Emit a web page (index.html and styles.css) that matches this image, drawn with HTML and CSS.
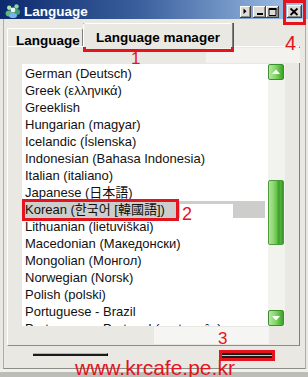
FILE: index.html
```html
<!DOCTYPE html>
<html>
<head>
<meta charset="utf-8">
<title>Language</title>
<link rel="stylesheet" href="styles.css">
</head>
<body>
<div class="window">
  <div class="titlebar">
    <svg class="appicon" width="16" height="15" viewBox="0 0 16 15">
      <circle cx="11.5" cy="3.5" r="2.2" fill="#8fd6a8"/>
      <ellipse cx="11.5" cy="9" rx="3.6" ry="3" fill="#3da06e"/>
      <circle cx="4.2" cy="4.8" r="2.2" fill="#a8e6b8"/>
      <ellipse cx="4.2" cy="10.4" rx="3.6" ry="3" fill="#5bbb7c"/>
      <circle cx="8" cy="7" r="2.4" fill="#eef6ff"/>
      <ellipse cx="8" cy="12.6" rx="4" ry="2.6" fill="#7fb2ec"/>
    </svg>
    <span class="title">Language</span>
    <div class="tbtns">
      <span class="tbtn b-arrow"><svg width="11" height="12" viewBox="0 0 11 12"><polygon points="3.5,2.5 6.5,5.3 3.5,8" fill="#000"/></svg></span>
      <span class="tbtn b-min"><svg width="13" height="12" viewBox="0 0 13 12"><rect x="4" y="7" width="6" height="2" fill="#000"/></svg></span>
      <span class="tbtn b-max"><svg width="13" height="12" viewBox="0 0 13 12"><path d="M3 2.5h7v7h-7z" fill="none" stroke="#000" stroke-width="1"/><rect x="3" y="2" width="7.5" height="2" fill="#000"/></svg></span>
      <span class="tbtn b-close"><svg width="15" height="13" viewBox="0 0 15 13"><path d="M3.5 3.5L10.5 10M10.5 3.5L3.5 10" stroke="#000" stroke-width="1.8"/></svg></span>
    </div>
  </div>

  <div class="client">
    <div class="tabs">
      <div class="tab">Language</div>
      <div class="tab active">Language manager</div>
    </div>
    <div class="panel">
      <div class="listwrap">
        <ul class="list">
          <li>German (Deutsch)</li>
          <li>Greek (ελληνικά)</li>
          <li>Greeklish</li>
          <li>Hungarian (magyar)</li>
          <li>Icelandic (Íslenska)</li>
          <li>Indonesian (Bahasa Indonesia)</li>
          <li>Italian (italiano)</li>
          <li>Japanese (日本語)</li>
          <li class="sel">Korean (한국어 [韓國語])</li>
          <li>Lithuanian (lietuviškai)</li>
          <li>Macedonian (Македонски)</li>
          <li>Mongolian (Монгол)</li>
          <li>Norwegian (Norsk)</li>
          <li>Polish (polski)</li>
          <li>Portuguese - Brazil</li>
          <li>Portuguese - Portugal (português)</li>
        </ul>
        <div class="scrollbar">
          <div class="sbtn"><svg width="16" height="16" viewBox="0 0 16 16"><polygon points="4,10 8,5.5 12,10" fill="#fff"/></svg></div>
          <div class="thumb"></div>
          <div class="sbtn down"><svg width="16" height="16" viewBox="0 0 16 16"><polygon points="4,6 8,10.5 12,6" fill="#fff"/></svg></div>
        </div>
      </div>
    </div>
    <div class="statusrow">
      <div class="slider"></div>
      <div class="dbl"></div>
    </div>
  </div>
  <div class="bottomframe"></div>

  <div class="patch"></div>
  <div class="mark-box box-tab"></div>
  <div class="mark-box box-close"></div>
  <div class="mark-box box-kor"></div>
  <div class="mark-box box-dbl"></div>
  <div class="mark-num n1">1</div>
  <div class="mark-num n2">2</div>
  <div class="mark-num n3">3</div>
  <div class="mark-num n4">4</div>
  <div class="watermark">www.krcafe.pe.kr</div>
</div>
</body>
</html>
```

FILE: styles.css
```css
* { box-sizing: border-box; }

body {
  margin: 0;
  background: #e9e8e3;
}

.window {
  position: relative;
  width: 308px;
  height: 377px;
  overflow: hidden;
  background: #e9e8e3;
  font-family: "Liberation Sans", "Noto Sans CJK KR", sans-serif;
  display: flex;
  flex-direction: column;
}

/* title bar */
.titlebar {
  height: 19px;
  flex: none;
  display: flex;
  align-items: flex-start;
  background: linear-gradient(to right, #0c2a6e 0%, #3a5f9c 45%, #a8c8ee 100%);
}

.appicon {
  margin: 3px 0 0 5px;
  flex: none;
}

.title {
  margin-left: 3px;
  padding-top: 4px;
  line-height: 15px;
  font-size: 13.5px;
  font-weight: bold;
  color: #fff;
}

.tbtns {
  margin-left: auto;
  padding: 6px 6px 0 0;
  display: flex;
  align-items: flex-start;
}

.tbtn {
  display: block;
  height: 12px;
  background: #dcdbd6;
  box-shadow: inset -1px -1px #404040, inset 1px 1px #ffffff, inset -2px -2px #8a8a86;
}

.tbtn svg { display: block; }

.b-arrow { width: 11px; }
.b-min { width: 13px; margin-left: 2px; }
.b-max { width: 13px; }
.b-close { width: 15px; height: 13px; margin-left: 8px; margin-top: -1px; }

/* client area */
.client {
  margin-left: 3px;
  width: 303px;
  height: 350px;
  flex: none;
  border-left: 1px solid #aeada8;
  border-right: 1px solid #aeada8;
  border-bottom: 1px solid #8c8c88;
}

.tabs {
  position: relative;
  z-index: 1;
  height: 23px;
  margin: 4px 0 0 3px;
  display: flex;
  align-items: flex-end;
}

.tab {
  height: 18px;
  width: 76px;
  padding: 4px 0 0 8px;
  line-height: 15px;
  font-size: 13.5px;
  font-weight: bold;
  color: #000;
  white-space: nowrap;
  background: #e9e8e3;
  border-top: 1px solid #fff;
  border-left: 1px solid #fff;
  border-right: 1px solid #808080;
  border-radius: 2px 2px 0 0;
}

.tab.active {
  width: 150px;
  height: 24px;
  margin-bottom: -1px;
  padding: 6px 0 0 0;
  text-align: center;
}

.panel {
  margin-left: 3px;
  width: 293px;
  height: 300px;
  padding: 17px 0 0 14px;
  border-top: 1px solid #fff;
  border-left: 1px solid #fff;
  border-right: 1px solid #7c7c7c;
  border-bottom: 1px solid #8c8c8c;
}

.listwrap {
  display: flex;
  width: 263px;
  height: 262px;
}

.list {
  width: 246px;
  height: 262px;
  margin: 0;
  padding: 1px 0 0 0;
  list-style: none;
  background: #fff;
  overflow: hidden;
  font-size: 13px;
  line-height: 17px;
  color: #111;
}

.list li {
  height: 17px;
  padding-left: 3px;
  white-space: nowrap;
}

.list li.sel {
  background: #cdcdcb;
  margin-right: 3px;
}

.scrollbar {
  width: 17px;
  height: 262px;
  background: #f2f2ee;
  display: flex;
  flex-direction: column;
}

.sbtn {
  width: 16px;
  height: 16px;
  border: 1px solid #3c8e2e;
  border-radius: 2px;
  background: linear-gradient(to right, #b6e6a2 0%, #86d66a 45%, #58bf3e 75%, #3f9f2e 100%);
}

.sbtn svg { display: block; margin: -1px; }

.sbtn.down { margin-top: auto; }

.thumb {
  width: 16px;
  height: 65px;
  margin-top: 100px;
  border: 1px solid #4a9e3a;
  border-radius: 2px;
  background: linear-gradient(to right, #b0e29a 0%, #92d677 30%, #63c546 55%, #3c9c2b 70%, #52b53c 85%, #3b8c2c 100%);
}

.statusrow {
  height: 22px;
  padding: 7px 0 0 29px;
  display: flex;
  align-items: flex-start;
}

.slider {
  width: 75px;
  height: 3px;
  border-top: 1px solid #b4b4b0;
  border-right: 1px solid #000;
  background: #1c1c1c;
}

.dbl {
  width: 50px;
  height: 5px;
  margin-left: 114px;
  border-top: 2px solid #1a1a1a;
  border-bottom: 2px solid #1a1a1a;
  background: #c8c8c4;
}

.bottomframe {
  height: 8px;
  flex: none;
  background: linear-gradient(#f1f0ec 0 3px, #bdbdb8 3px);
}

/* annotation overlays */
.patch {
  position: absolute;
  left: 206px;
  top: 48px;
  width: 94px;
  height: 15px;
  background: #f3f2ee;
}

.mark-box {
  position: absolute;
  border: 3px solid #e3141d;
}

.box-tab { left: 83px; top: 23px; width: 151px; height: 29px; }
.box-close { left: 283px; top: 0; width: 23px; height: 25px; }
.box-kor { left: 22px; top: 199px; width: 157px; height: 22px; }
.box-dbl { left: 219px; top: 350px; width: 56px; height: 11px; }

.mark-num {
  position: absolute;
  color: #e3141d;
  font-family: "Liberation Sans", sans-serif;
}

.n1 { left: 131px; top: 50px; font-size: 17px; line-height: 17px; }

.n2 {
  left: 180px;
  top: 204px;
  width: 53px;
  height: 14px;
  padding: 1px 0 0 2px;
  background: #fff;
  font-size: 18px;
  line-height: 18px;
}

.n3 {
  left: 154px;
  top: 327px;
  width: 115px;
  height: 17px;
  padding: 3px 0 0 64px;
  background: #f5f5f3;
  font-size: 17px;
  line-height: 17px;
}

.n4 { left: 285px; top: 33px; font-size: 20px; line-height: 20px; }

.watermark {
  position: absolute;
  left: 75px;
  top: 357px;
  font-family: "Liberation Sans", sans-serif;
  font-size: 21px;
  line-height: 21px;
  color: #e3141d;
  white-space: nowrap;
}
```
